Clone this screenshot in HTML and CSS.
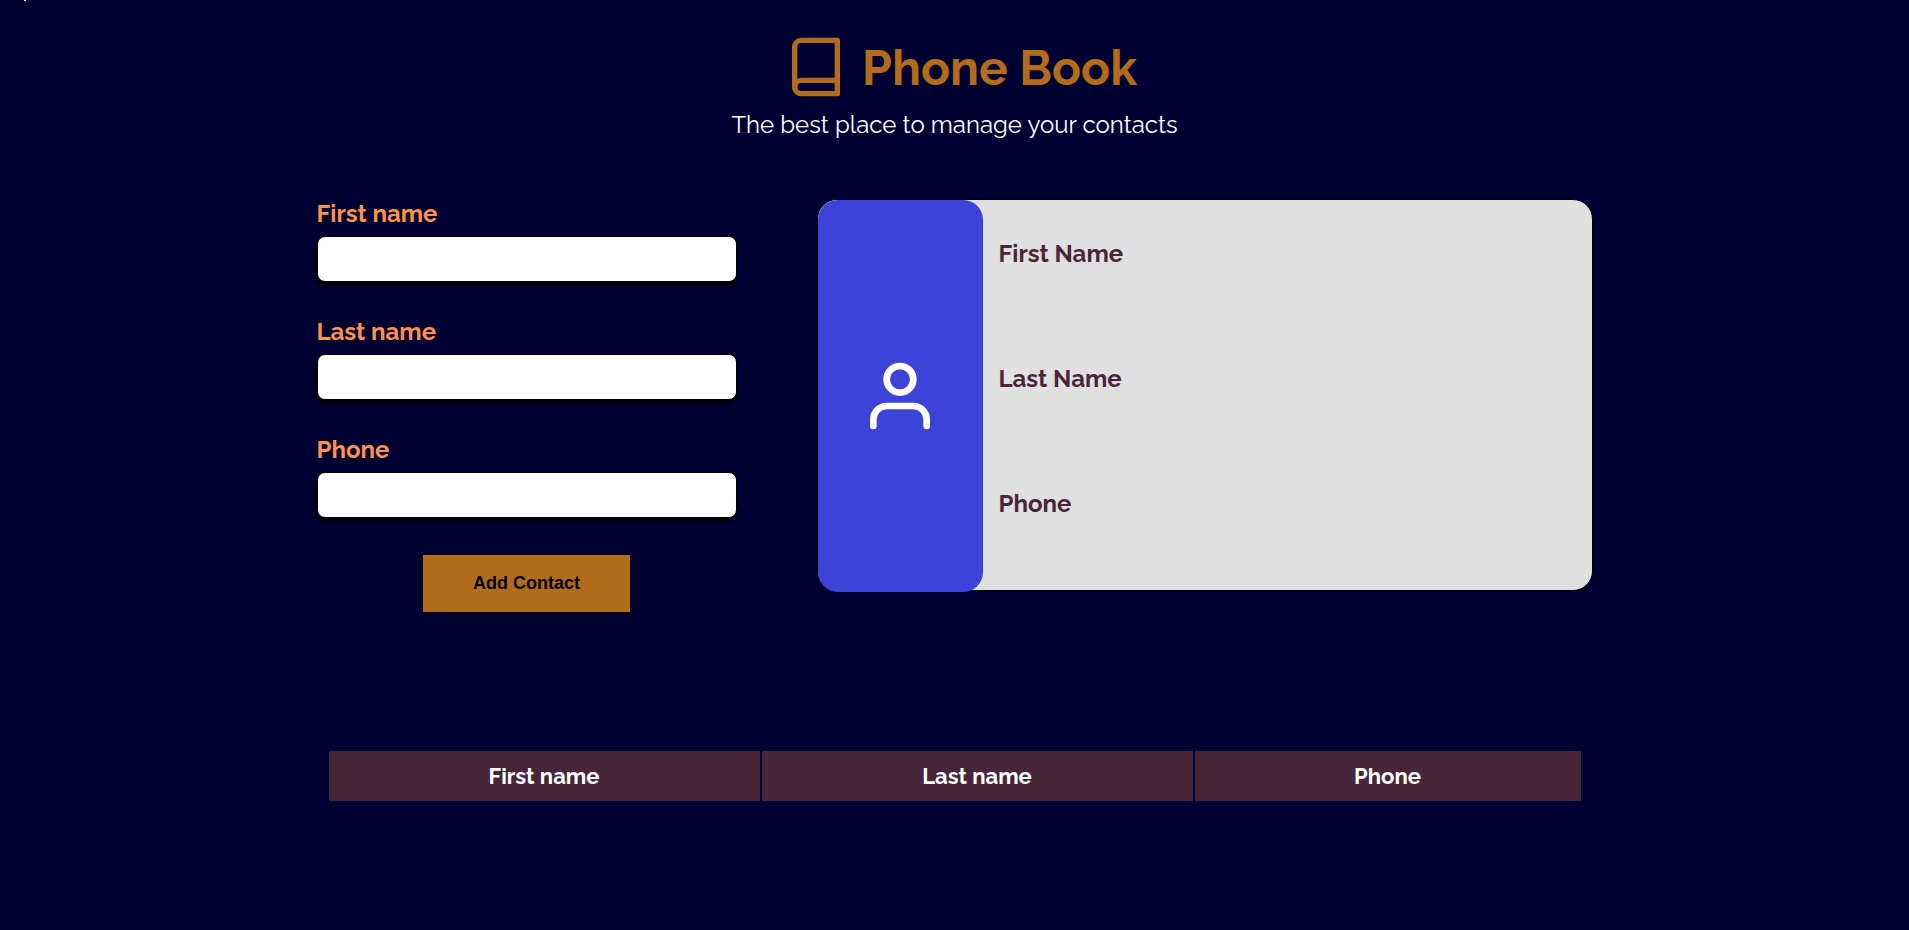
FILE: index.html
```html
<!DOCTYPE html>
<html lang="en">
<head>
<meta charset="utf-8">
<title>Phone Book</title>
<link rel="stylesheet" href="styles.css">
</head>
<body>
<span class="mark"></span>
<header class="header">
  <div class="brand">
    <svg class="book-icon" viewBox="0 0 24 24" aria-hidden="true"><path d="M4 19.5A2.5 2.5 0 0 1 6.5 17H20"/><path d="M6.5 2H20v20H6.5A2.5 2.5 0 0 1 4 19.5v-15A2.5 2.5 0 0 1 6.5 2z"/></svg>
    <h1 class="title">Phone Book</h1>
  </div>
  <p class="subtitle">The best place to manage your contacts</p>
</header>
<main class="content">
  <div class="panels">
    <form class="form">
      <div class="field"><label class="label" for="first">First name</label><input class="input" id="first" type="text"></div>
      <div class="field"><label class="label" for="last">Last name</label><input class="input" id="last" type="text"></div>
      <div class="field"><label class="label" for="phone">Phone</label><input class="input" id="phone" type="tel"></div>
      <button class="button" type="button">Add Contact</button>
    </form>
    <section class="card">
      <div class="avatar">
        <svg class="user-icon" viewBox="0 0 24 24" aria-hidden="true"><path d="M20 21v-2a4 4 0 0 0-4-4H8a4 4 0 0 0-4 4v2"/><circle cx="12" cy="7" r="4"/></svg>
      </div>
      <div class="details">
        <h2 class="detail">First Name</h2>
        <h2 class="detail">Last Name</h2>
        <h2 class="detail">Phone</h2>
      </div>
    </section>
  </div>
  <table class="table">
    <thead><tr><th class="wide">First name</th><th class="wide">Last name</th><th>Phone</th></tr></thead>
  </table>
</main>
</body>
</html>
```
FILE: styles.css
```css
* { box-sizing: border-box; }
body {
  margin: 0;
  background: #000033;
  color: #fff;
  font-family: Raleway, Lato, sans-serif;
}
.mark {
  position: absolute;
  top: 0;
  left: 24px;
  width: 2px;
  height: 1px;
  background: #fff;
}
.header { padding-top: 34px; text-align: center; }
.brand { display: flex; justify-content: center; align-items: center; gap: 14px; padding-left: 12px; }
.book-icon, .user-icon {
  fill: none;
  stroke: currentColor;
  stroke-width: 2;
  stroke-linecap: round;
  stroke-linejoin: round;
}
.book-icon { width: 64px; height: 64px; color: #b36b1c; }
.title { margin: 0; padding-top: 2px; font-size: 48px; line-height: 64px; font-weight: 700; color: #b36b1c; }
.subtitle { margin: 10px 0 0; font-size: 24px; line-height: 30px; }
.content { width: 67%; max-width: 1276px; margin: 59px auto 0; }
.panels { display: flex; align-items: flex-start; justify-content: space-between; }
.form { width: 33%; max-width: 420px; padding-top: 1px; display: flex; flex-direction: column; }
.field { display: flex; flex-direction: column; gap: 8px; margin-bottom: 36px; }
.label { font-size: 24px; line-height: 28px; font-weight: 700; color: #ff914d; }
.input {
  width: 100%;
  height: 46px;
  padding: 8px;
  border: 1px solid #000;
  border-radius: 8px;
  background: #fff;
  font-size: 20px;
  box-shadow: -1px 3px 4px #000;
}
.button {
  align-self: center;
  padding: 18px 50px;
  border: 1px solid #000;
  background: #b36b1c;
  color: #000;
  font: 700 18px/21px "Liberation Sans", Arial, sans-serif;
  box-shadow: 0 1px 4px rgba(0, 0, 0, 0.6);
}
.card {
  width: 61%;
  max-width: 776px;
  height: 392px;
  display: flex;
  border: 1px solid #000;
  border-radius: 20px;
  background: #e0e0e0;
}
.avatar {
  width: 165px;
  height: 392px;
  display: flex;
  align-items: center;
  justify-content: center;
  border-radius: 20px;
  background: #3d42d9;
}
.user-icon { width: 80px; height: 80px; }
.details { flex: 1; padding: 40px 16px; display: flex; flex-direction: column; gap: 97px; }
.detail { margin: 0; font-size: 24px; line-height: 28px; font-weight: 700; color: #4a253a; }
.table { width: calc(100% - 20px); margin: 136px auto 0; border-spacing: 2px; table-layout: fixed; }
.table th {
  height: 50px;
  padding: 0;
  background: #47263a;
  font-size: 22px;
  font-weight: 700;
}
.table .wide { width: 431px; }
```
